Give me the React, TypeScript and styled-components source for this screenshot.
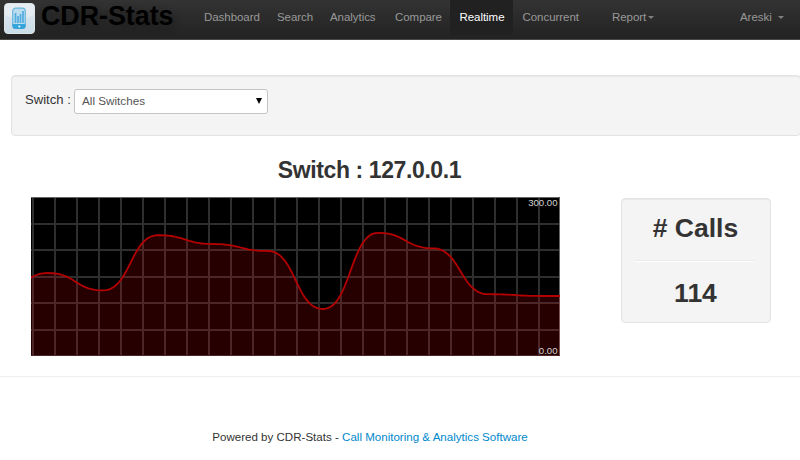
import React from "react";
import styled, { createGlobalStyle, css } from "styled-components";

const GlobalStyle = createGlobalStyle`
  * { box-sizing: border-box; }
  body {
    margin: 0;
    background: #fff;
    color: #333;
    font: 13px/20px "Liberation Sans", Arial, sans-serif;
    overflow: hidden;
  }
`;

const Page = styled.div`
  width: 800px;
  height: 460px;
  overflow: hidden;
`;

const Navbar = styled.header`
  display: flex;
  align-items: flex-start;
  height: 40px;
  padding-left: 4px;
  background: linear-gradient(#333, #222);
  border-bottom: 1px solid #484848;
`;

const Logo = styled.svg`
  display: block;
  flex: none;
  width: 31px;
  height: 31px;
  margin-top: 3px;
`;

const Brand = styled.div`
  width: 153px;
  margin-left: 6px;
  font-size: 26.8px;
  line-height: 32px;
  font-weight: bold;
  color: #000;
  white-space: nowrap;
  text-shadow: 3px 3px 8px rgba(0, 0, 0, 0.3);
`;

const NavItem = styled.a<{ $width: number; $active?: boolean }>`
  display: flex;
  align-items: center;
  flex: none;
  width: ${(p) => p.$width}px;
  height: 35px;
  padding: 0 0 1px 10px;
  font-size: 11.5px;
  letter-spacing: -0.05px;
  color: #999;
  white-space: nowrap;
  ${(p) =>
    p.$active &&
    css`
      padding-left: 9.5px;
      color: #fff;
      background: #212121;
    `}
`;

const Caret = styled.span<{ $gap: number }>`
  margin-left: ${(p) => p.$gap}px;
  border: 3.5px solid transparent;
  border-top-color: #808080;
  border-bottom: 0;
`;

const Well = styled.section`
  background: #f4f4f4;
  border: 1px solid #e3e3e3;
  border-radius: 4px;
  box-shadow: inset 0 1px 1px rgba(0, 0, 0, 0.05);
`;

const FilterBar = styled(Well)`
  display: flex;
  align-items: flex-start;
  width: 790px;
  height: 61px;
  margin: 35px 0 0 11px;
  padding: 13px 13px;
`;

const FilterLabel = styled.label`
  width: 49px;
  line-height: 21px;
  font-size: 13.1px;
  white-space: nowrap;
`;

const SelectBox = styled.div`
  display: flex;
  align-items: center;
  justify-content: space-between;
  width: 194px;
  height: 25px;
  padding: 0 5px 1px 7px;
  font-size: 11.7px;
  color: #555;
  background: #fff;
  border: 1px solid #c4c4c4;
  border-radius: 3px;
`;

const SelectArrow = styled.span`
  border: 3px solid transparent;
  border-top: 6px solid #000;
  border-bottom: 0;
`;

const Title = styled.h2`
  width: 739px;
  margin: 18px 0 0;
  text-align: center;
  font-size: 23px;
  letter-spacing: -0.4px;
  line-height: 32px;
`;

const Content = styled.main`
  display: flex;
  align-items: flex-start;
  height: 180px;
  margin-top: 11px;
  padding-left: 31px;
  border-bottom: 1px solid #eee;
`;

const Chart = styled.svg`
  display: block;
  flex: none;
  width: 529px;
  height: 159px;
`;

const ChartLabel = styled.text`
  font: 9.6px "Liberation Sans", Arial, sans-serif;
  fill: #d4d4d4;
  text-anchor: end;
`;

const CallsCard = styled(Well)`
  width: 150px;
  height: 125px;
  margin: 1px 0 0 61px;
  padding: 13px 15px 13px 14px;
  text-align: center;
`;

const CardValue = styled.div`
  font-size: 26.5px;
  line-height: 32px;
  font-weight: bold;
`;

const Divider = styled.hr`
  margin: 16px 0 15px;
  border: 0;
  border-top: 1px solid #e9e9e9;
  border-bottom: 1px solid #fff;
`;

const Footer = styled.footer`
  width: 740px;
  margin-top: 50px;
  text-align: center;
  font-size: 11.57px;
  white-space: nowrap;
`;

const FooterLink = styled.a`
  color: #0088cc;
`;

/* Samples arrive every 55px; each pair is joined by a horizontal-tangent bezier. */
const STEP = 55;
const SUBSTEPS = 28;
const samples = [103, 76, 93.4, 38.2, 47, 54, 112, 35.8, 51.3, 97.2, 99, 99];
const startX = 17 - STEP;

const curvePoints = samples.slice(1).flatMap((y, i) =>
  Array.from({ length: SUBSTEPS }, (_, k) => {
    const t = (k + 1) / SUBSTEPS;
    const px = 1.5 * t * (1 - t) + t ** 3;
    const py = t * t * (3 - 2 * t);
    const x = startX + STEP * (i + px);
    const value = samples[i] + (y - samples[i]) * py;
    return `${x.toFixed(2)} ${value.toFixed(2)}`;
  })
);
const curve = `M${startX} ${samples[0]} L${curvePoints.join(" L")}`;
const area = `${curve} V159 H${startX} Z`;

const columns = Array.from({ length: 24 }, (_, i) => 2 + i * 22);
const rows = Array.from({ length: 5 }, (_, i) => Math.round(27 + i * 26.4));

function CallsChart() {
  return (
    <Chart viewBox="0 0 529 159">
      <rect width="529" height="159" fill="#000" />
      <g stroke="#2e2e2e" strokeWidth="2">
        {columns.map((x) => (
          <path key={x} d={`M${x} 0V159`} />
        ))}
        {rows.map((y) => (
          <path key={y} d={`M0 ${y}H529`} />
        ))}
      </g>
      <path d="M0 .5H528.5V159" fill="none" stroke="#666" />
      <path d="M0 158.5H529" stroke="#2e2e2e" />
      <path d={area} fill="#f00" fillOpacity=".15" />
      <path d={curve} fill="none" stroke="#b40000" strokeWidth="1.8" />
      <ChartLabel x="526.5" y="9.3">300.00</ChartLabel>
      <ChartLabel x="526.5" y="157">0.00</ChartLabel>
    </Chart>
  );
}

function PhoneLogo() {
  return (
    <Logo viewBox="0 0 31 31">
      <defs>
        <linearGradient id="tile" x2="0" y2="1">
          <stop stopColor="#e1e8ed" />
          <stop offset="1" stopColor="#c9dce9" />
        </linearGradient>
      </defs>
      <rect x=".5" y=".5" width="30" height="30" rx="3.5" fill="url(#tile)" stroke="#dce4e8" />
      <path d="M1 4Q1 1 4 1H27Q30 1 30 4V12Q16 19 1 12Z" fill="#e9f0f4" opacity=".65" />
      <rect x="8.7" y="5.2" width="12.6" height="20" rx="3" fill="#b9dcef" stroke="#68b7dc" strokeWidth="1.2" />
      <path d="M8.5 21H21.5V23Q21.5 26 18.5 26H11.5Q8.5 26 8.5 23Z" fill="#35a5d9" />
      <path d="M11.5 20V10M14 20V13M16.5 20V11M19 20V8" stroke="#51ace0" strokeWidth="1.7" />
      <circle cx="15.3" cy="23.5" r="1.1" fill="#e7f8ff" />
    </Logo>
  );
}

export default function App() {
  return (
    <>
      <GlobalStyle />
      <Page>
        <Navbar>
          <PhoneLogo />
          <Brand>CDR-Stats</Brand>
          <NavItem $width={73}>Dashboard</NavItem>
          <NavItem $width={53}>Search</NavItem>
          <NavItem $width={65}>Analytics</NavItem>
          <NavItem $width={65}>Compare</NavItem>
          <NavItem $width={62.5} $active>Realtime</NavItem>
          <NavItem $width={89.5}>Concurrent</NavItem>
          <NavItem $width={128}>Report<Caret $gap={2} /></NavItem>
          <NavItem $width={70}>Areski<Caret $gap={6} /></NavItem>
        </Navbar>
        <FilterBar>
          <FilterLabel>Switch :</FilterLabel>
          <SelectBox>All Switches<SelectArrow /></SelectBox>
        </FilterBar>
        <Title>Switch : 127.0.0.1</Title>
        <Content>
          <CallsChart />
          <CallsCard>
            <CardValue># Calls</CardValue>
            <Divider />
            <CardValue>114</CardValue>
          </CallsCard>
        </Content>
        <Footer>
          Powered by CDR-Stats - <FooterLink>Call Monitoring &amp; Analytics Software</FooterLink>
        </Footer>
      </Page>
    </>
  );
}
